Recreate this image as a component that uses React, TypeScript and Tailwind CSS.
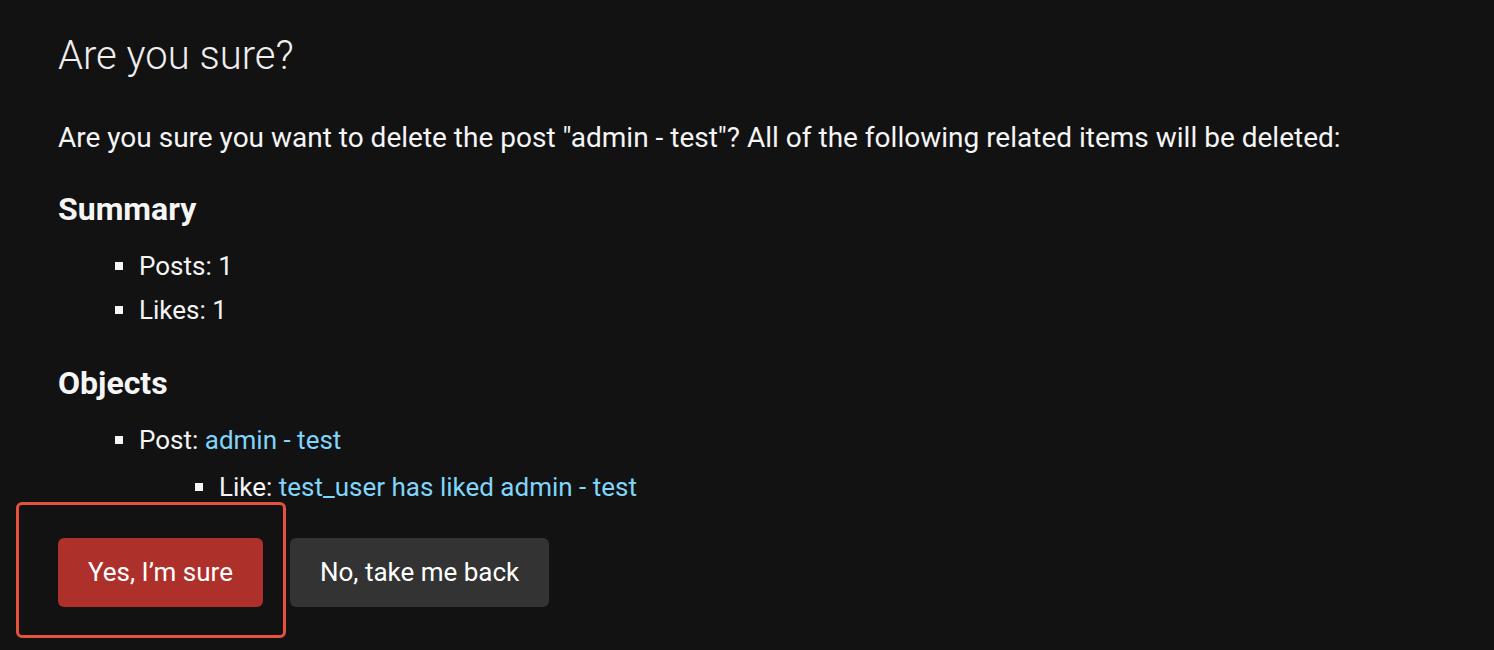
import React from "react";

const Item = ({ children }: { children: React.ReactNode }) => (
  <li className="flex items-center">
    <span className="mr-[16px] h-[8px] w-[8px] flex-shrink-0 bg-[#f5f5f5]" />
    <span>{children}</span>
  </li>
);

export default function App() {
  return (
    <div
      className="min-h-[650px] w-full bg-[#121212] px-[58px] pt-[28px] text-[#f5f5f5]"
      style={{ fontFamily: "Roboto, 'Noto Sans', sans-serif" }}
    >
      <h1 className="text-[40px] font-light leading-[56px] text-[#eeeeee]">Are you sure?</h1>
      <p className="mt-[36px] text-[28px] leading-[36px]">
        Are you sure you want to delete the post "admin - test"? All of the following related items will be deleted:
      </p>

      <h2 className="mt-[33px] text-[32px] font-bold leading-[40px]">Summary</h2>
      <ul className="mt-[21px] flex flex-col gap-[12px] pl-[57px] text-[26px] leading-[32px]">
        <Item>Posts: 1</Item>
        <Item>Likes: 1</Item>
      </ul>

      <h2 className="mt-[37px] text-[32px] font-bold leading-[40px]">Objects</h2>
      <ul className="mt-[21px] flex flex-col gap-[15px] pl-[57px] text-[26px] leading-[32px]">
        <Item>
          Post: <a className="text-[#81d4fa]">admin - test</a>
        </Item>
        <li className="pl-[80px]">
          <ul>
            <Item>
              Like: <a className="text-[#81d4fa]">test_user has liked admin - test</a>
            </Item>
          </ul>
        </li>
      </ul>

      <div className="relative mt-[35px] flex gap-[27px]">
        <button className="h-[69px] rounded-[6px] bg-[#ad302b] px-[30px] text-[26px] text-white">
          Yes, I’m sure
        </button>
        <button className="h-[69px] rounded-[6px] bg-[#333333] px-[30px] text-[26px] text-white">
          No, take me back
        </button>
        <div className="pointer-events-none absolute left-[-42px] top-[-36px] h-[136px] w-[270px] rounded-[6px] border-[3px] border-[#e4533a]" />
      </div>
    </div>
  );
}
